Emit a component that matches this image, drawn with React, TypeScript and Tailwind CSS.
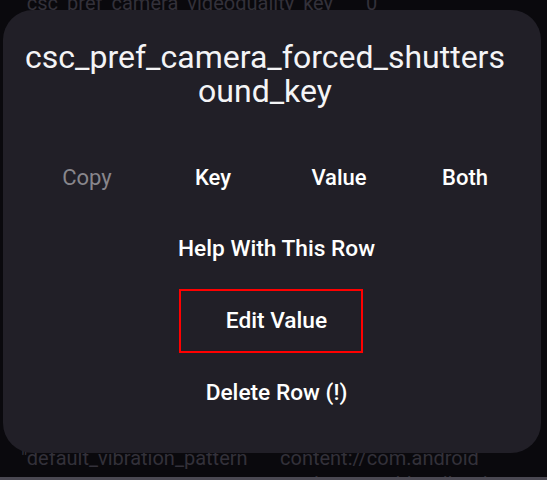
import React from 'react';

const font = { fontFamily: 'Roboto, "Noto Sans", sans-serif' };

const CopyRow: React.FC = () => (
  <div className="ml-[21px] grid w-[504px] grid-cols-4 text-[22px]">
    <div className="flex h-[72px] items-center justify-center text-[#88868c]">Copy</div>
    <div className="flex h-[72px] items-center justify-center font-medium text-white">Key</div>
    <div className="flex h-[72px] items-center justify-center font-medium text-white">Value</div>
    <div className="flex h-[72px] items-center justify-center font-medium text-white">Both</div>
  </div>
);

const ActionButton: React.FC<{ label: string }> = ({ label }) => (
  <div className="flex h-[72px] items-center justify-center pl-[9px] text-[22.7px] font-medium text-white">
    {label}
  </div>
);

export default function App() {
  return (
    <div className="relative h-[480px] w-[547px] overflow-hidden bg-[#0a090d]" style={font}>
      {/* list behind the dialog */}
      <div className="flex h-full flex-col text-[20px] text-[#33313a]">
        <div className="-mt-[9px] flex gap-[20px] pl-[21px] leading-[24px]">
          <span>"csc_pref_camera_videoquality_key"</span>
          <span>"0"</span>
        </div>
        <div className="flex-1" />
        <div className="flex leading-[26px]">
          <span className="w-[280px] pl-[21px]">"default_vibration_pattern</span>
          <span>content://com.android</span>
        </div>
        <div className="flex h-[6px] overflow-hidden leading-[26px]">
          <span className="w-[280px] pl-[21px]"></span>
          <span>settings.provider.vibration</span>
        </div>
        <div className="h-[3px] shrink-0 bg-[#4a4852]" />
      </div>

      {/* dialog */}
      <div className="absolute left-[3px] top-[10px] h-[443px] w-[538px] rounded-[30px] bg-[#211f27]">
        <div className="pl-[22px] pr-[36px] pt-[30px] text-center text-[32px] leading-[34px] break-all text-[#f4f4f6]">
          csc_pref_camera_forced_shuttersound_key
        </div>
        <div className="mt-[33px]">
          <CopyRow />
          <ActionButton label="Help With This Row" />
          <ActionButton label="Edit Value" />
          <ActionButton label="Delete Row (!)" />
        </div>
      </div>

      {/* highlight box */}
      <div className="absolute left-[179px] top-[289px] h-[64px] w-[184px] border-2 border-[#ff0000]" />
    </div>
  );
}
